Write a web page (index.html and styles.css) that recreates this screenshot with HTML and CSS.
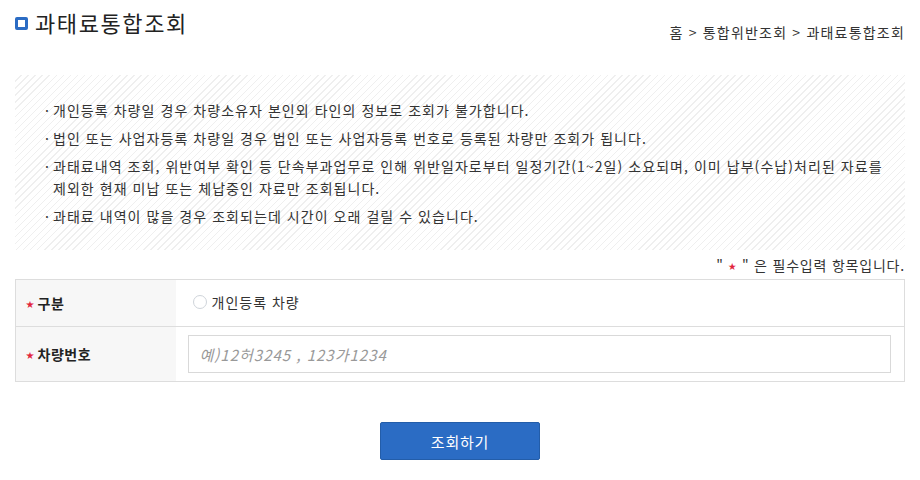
FILE: index.html
```html
<!DOCTYPE html>
<html lang="ko">
<head>
    <meta charset="UTF-8">
    <meta name="viewport" content="width=device-width, initial-scale=1.0">
    <title>과태료통합조회</title>
    <link rel="stylesheet" href="styles.css">
</head>
<body>
    <div class="page">
        <div class="title-bar">
            <h2 class="title"><span class="title-icon"></span>과태료통합조회</h2>
            <div class="location">홈 &gt; 통합위반조회 &gt; 과태료통합조회</div>
        </div>

        <div class="notice">
            <ul>
                <li>개인등록 차량일 경우 차량소유자 본인외 타인의 정보로 조회가 불가합니다.</li>
                <li>법인 또는 사업자등록 차량일 경우 법인 또는 사업자등록 번호로 등록된 차량만 조회가 됩니다.</li>
                <li>과태료내역 조회, 위반여부 확인 등 단속부과업무로 인해 위반일자로부터 일정기간(1~2일) 소요되며, 이미 납부(수납)처리된 자료를 제외한 현재 미납 또는 체납중인 자료만 조회됩니다.</li>
                <li>과태료 내역이 많을 경우 조회되는데 시간이 오래 걸릴 수 있습니다.</li>
            </ul>
        </div>

        <p class="required-note">" <span class="star">★</span> " 은 필수입력 항목입니다.</p>

        <table class="form-table">
            <tr>
                <th><span class="star">★</span>구분</th>
                <td class="radio-cell">
                    <label class="radio"><span class="radio-mark"></span>개인등록 차량</label>
                </td>
            </tr>
            <tr>
                <th><span class="star">★</span>차량번호</th>
                <td class="input-cell">
                    <input type="text" class="car-input" placeholder="예)12허3245 , 123가1234">
                </td>
            </tr>
        </table>

        <div class="btn-area">
            <button type="button" class="search-btn">조회하기</button>
        </div>
    </div>
</body>
</html>
```

FILE: styles.css
```css
* {
    margin: 0;
    padding: 0;
    box-sizing: border-box;
    font-family: 'Noto Sans CJK KR', 'Noto Sans', sans-serif;
}

body {
    background: #fff;
    color: #333;
    font-size: 14px;
}

.page {
    padding: 0 15px;
}

.title-bar {
    display: flex;
    justify-content: space-between;
    align-items: flex-end;
    height: 44px;
}

.title {
    display: flex;
    align-items: center;
    font-size: 22px;
    font-weight: 400;
    letter-spacing: 1.6px;
    color: #222;
    line-height: 44px;
    margin-top: -21px;
}

.title-icon {
    display: inline-block;
    width: 13px;
    height: 13px;
    border: 3px solid #2b6cc4;
    background: #fff;
    border-radius: 2px;
    margin-right: 7px;
    margin-top: 2px;
}

.location {
    font-size: 14px;
    letter-spacing: 1.2px;
    color: #333;
    line-height: 16px;
    margin-bottom: 4px;
}

.notice {
    margin-top: 31px;
    height: 175px;
    padding: 24px 18px 0 30px;
    background: repeating-linear-gradient(135deg, #fff 0, #fff 4px, #efefef 4px, #efefef 5px);
}

.notice ul {
    list-style: none;
}

.notice li {
    position: relative;
    padding-left: 8px;
    line-height: 22px;
    margin-bottom: 6px;
    font-size: 14px;
    letter-spacing: 1.05px;
    color: #333;
}

.notice li::before {
    content: "·";
    position: absolute;
    left: 0;
    top: 0;
}

.required-note {
    text-align: right;
    font-size: 14px;
    letter-spacing: 0.8px;
    line-height: 18px;
    margin-top: 6px;
    margin-bottom: 4px;
}

.star {
    color: #e2253d;
    font-size: 8px;
    vertical-align: 2px;
}

.form-table {
    width: 100%;
    border-collapse: collapse;
    border: 1px solid #ddd;
}

.form-table tr {
    border-bottom: 1px solid #ddd;
}

.form-table th {
    width: 160px;
    background: #f7f7f7;
    text-align: left;
    font-size: 14px;
    font-weight: 700;
    letter-spacing: 0.5px;
    color: #222;
    padding-left: 10px;
}

.form-table th .star {
    margin-right: 3px;
}

.radio-cell {
    height: 47px;
    padding-left: 17px;
    vertical-align: top;
    padding-top: 12px;
}

.radio {
    display: inline-flex;
    align-items: center;
    font-size: 14px;
    letter-spacing: 1px;
    color: #333;
}

.radio-mark {
    width: 14px;
    height: 14px;
    border: 1px solid #cfd4da;
    border-radius: 50%;
    margin-right: 5px;
    background: #fff;
}

.input-cell {
    height: 55px;
    padding: 8px 13px 8px 12px;
}

.car-input {
    width: 100%;
    height: 38px;
    border: 1px solid #d9d9d9;
    padding: 0 11px;
    font-size: 15px;
    letter-spacing: 1px;
    color: #333;
}

.car-input::placeholder {
    color: #999;
    font-style: italic;
}

.btn-area {
    text-align: center;
    margin-top: 40px;
}

.search-btn {
    width: 160px;
    height: 38px;
    background: #2b6cc4;
    border: 1px solid #235da9;
    border-radius: 2px;
    color: #fff;
    font-size: 15px;
    letter-spacing: 0.8px;
    cursor: pointer;
}
```
